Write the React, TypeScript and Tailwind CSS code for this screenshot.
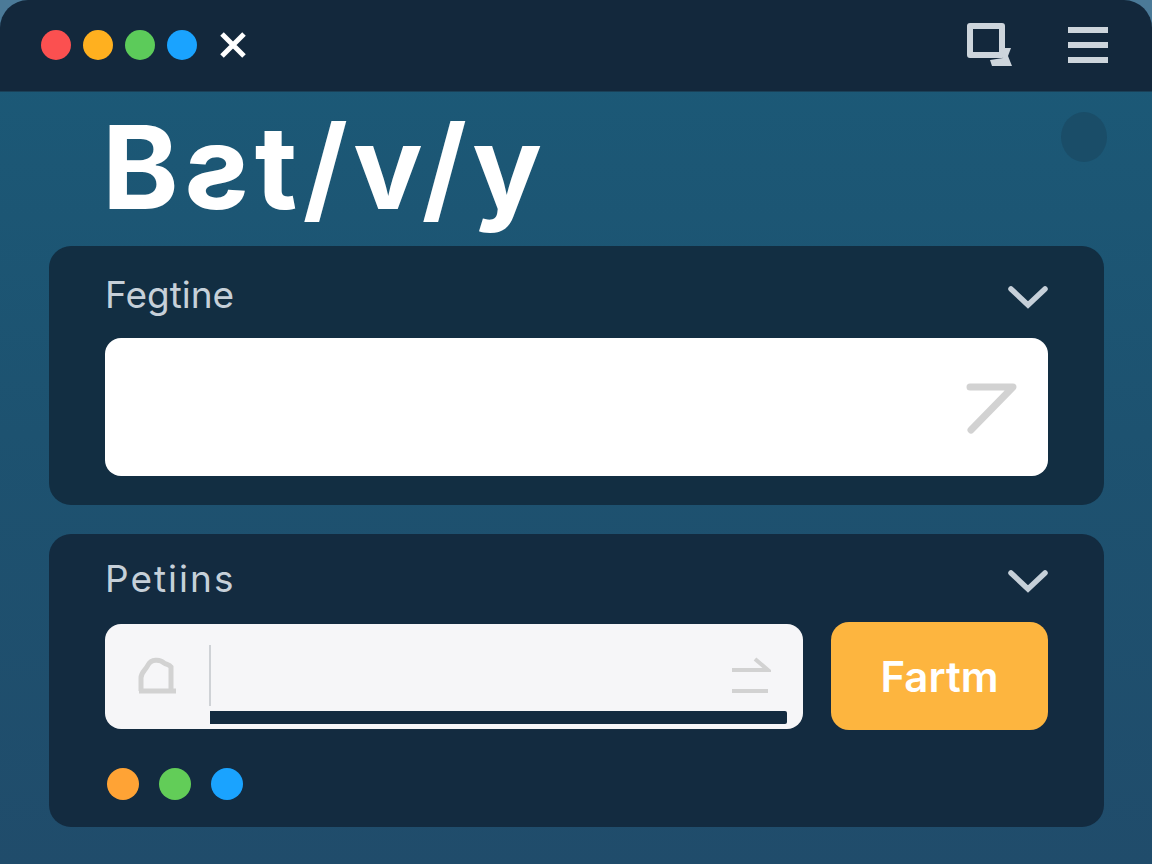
import React from 'react';

const HEADER_DOTS = ['bg-[#fb5050]', 'bg-[#ffb01f]', 'bg-[#5ccb5a]', 'bg-[#1aa3ff]'];
const FOOTER_DOTS = ['bg-[#ffa335]', 'bg-[#62cd58]', 'bg-[#1aa3ff]'];

function Chevron() {
  return (
    <svg className="mt-[5px]" width="40" height="26" viewBox="0 0 40 26" fill="none" stroke="#c6d0d9" strokeWidth="5.5" strokeLinecap="round">
      <path d="M3 4 L20 20 L37 4" />
    </svg>
  );
}

function PanelHeader({ label, tracking }: { label: string; tracking: string }) {
  return (
    <div className="flex items-center justify-between">
      <span className={`text-[37px] leading-[44px] text-[#c6d0d9] font-['Inter',sans-serif] ${tracking}`}>{label}</span>
      <Chevron />
    </div>
  );
}

export default function App() {
  return (
    <div className="relative w-[1152px] h-[864px] overflow-hidden bg-gradient-to-b from-[#1b5a78] via-[#1d5270] to-[#204c6b] font-['Inter',sans-serif]">
      <div className="bg-[#4b7a98]">
        <header className="h-[92px] rounded-t-[28px] bg-[#13283c] flex items-center justify-between pl-[41px] pr-[44px] pb-[2px] border-b border-[#1a4057]">
          <div className="flex items-center gap-[12px]">
            {HEADER_DOTS.map(dot => (
              <span key={dot} className={`w-[30px] h-[30px] rounded-full ${dot}`} />
            ))}
            <svg className="ml-[10px]" width="28" height="28" viewBox="0 0 28 28" fill="none" stroke="#ffffff" strokeWidth="5">
              <path d="M3 3 L25 25 M25 3 L3 25" />
            </svg>
          </div>
          <div className="flex items-center gap-[54px]">
            <svg width="48" height="46" viewBox="0 0 48 46" fill="none">
              <path d="M4 4 H36 V33 H4 Z" stroke="#cdd5dc" strokeWidth="6" strokeLinejoin="round" />
              <path d="M38 26 L45 26 L42 34 L46 44 H26 L24 38 L37 36 Z" fill="#cdd5dc" />
            </svg>
            <div className="flex flex-col gap-[9px] w-[40px]">
              <span className="h-[6px] bg-[#cdd5dc]" />
              <span className="h-[6px] bg-[#cdd5dc]" />
              <span className="h-[6px] bg-[#cdd5dc]" />
            </div>
          </div>
        </header>
      </div>

      <div className="absolute left-[1061px] top-[112px] w-[46px] h-[50px] rounded-[50%] bg-[#1a4d68]" />

      <main className="pl-[49px] pr-[48px]">
        <h1 className="pl-[53px] pt-[10px] h-[154px] text-[116px] leading-[130px] font-bold text-white font-['Inter',sans-serif] tracking-[5.5px]">Bƨt/v/y</h1>

        <section className="h-[259px] rounded-[22px] bg-[#122e42] px-[56px] pt-[27px]">
          <PanelHeader label="Fegtine" tracking="tracking-normal" />
          <div className="mt-[21px] h-[138px] rounded-[16px] bg-white flex items-center justify-end pr-[30px] pt-[4px]">
            <svg width="52" height="52" viewBox="0 0 52 52" fill="none" stroke="#d2d2d2" strokeWidth="7" strokeLinecap="round" strokeLinejoin="round">
              <path d="M4 4 H47 L5 47" />
            </svg>
          </div>
        </section>

        <section className="mt-[29px] h-[293px] rounded-[22px] bg-[#132b40] px-[56px] pt-[23px]">
          <PanelHeader label="Petiins" tracking="tracking-[2px]" />
          <div className="mt-[21px] flex items-center gap-[28px]">
            <div className="flex-1 h-[105px] rounded-[16px] bg-[#f6f6f8] flex">
              <div className="w-[104px] flex items-center justify-center">
                <svg width="42" height="38" viewBox="0 0 42 38" fill="none" stroke="#d2d2d2" strokeWidth="5">
                  <path d="M3 34 H40 M5 34 V21 C5 15 9 14 12 8 C15 2 24 2 28 6 C31 8 33 7 35 10 V34" />
                </svg>
              </div>
              <div className="flex-1 pt-[21px] pr-[16px] flex flex-col">
                <div className="h-[61px] border-l-2 border-[#cfd2d6] flex items-center justify-end pr-[16px]">
                  <svg width="40" height="38" viewBox="0 0 40 38" fill="none" stroke="#d2d2d2" strokeWidth="4">
                    <path d="M1 14 H37 L24 3 M1 35 H37" />
                  </svg>
                </div>
                <div className="mt-[5px] ml-[1px] h-[13px] rounded-r-[2px] bg-[#132b40]" />
              </div>
            </div>
            <button className="w-[217px] h-[108px] rounded-[18px] bg-[#fdb53f] text-white text-[42px] font-semibold font-['Inter',sans-serif]">Fartm</button>
          </div>
          <div className="mt-[38px] ml-[2px] flex gap-[20px]">
            {FOOTER_DOTS.map(dot => (
              <span key={dot} className={`w-[32px] h-[32px] rounded-full ${dot}`} />
            ))}
          </div>
        </section>
      </main>
    </div>
  );
}
